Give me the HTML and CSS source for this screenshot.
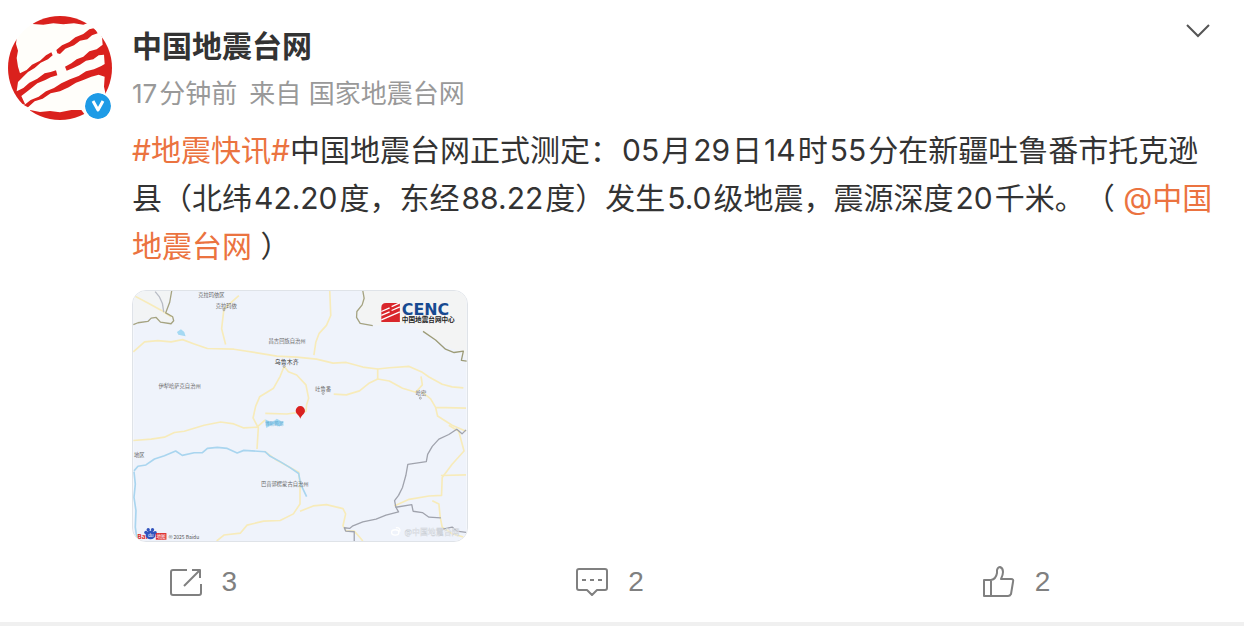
FILE: index.html
```html
<!DOCTYPE html>
<html lang="zh-CN">
<head>
    <meta charset="UTF-8">
    <meta name="viewport" content="width=device-width, initial-scale=1.0">
    <title>中国地震台网</title>
    <link rel="stylesheet" href="styles.css">
</head>
<body>
    <article class="post">
        <div class="avatar">
            <svg class="avatar-img" viewBox="24 24 312 312" aria-hidden="true">
                <defs>
                    <clipPath id="round"><circle cx="180" cy="180" r="156"/></clipPath>
                </defs>
                <g clip-path="url(#round)">
                    <rect x="24" y="24" width="312" height="312" fill="#fffefa"/>
                    <g fill="#da211d">
                        <path d="M104 20H256L266 44L250 50L222 46L190 49L160 46L130 50L98 48Z"/>
                        <path d="M20 90H50L48 108L54 128L50 150L54 176L60 196L80 186L96 170L120 158L138 142L154 133L158 142L144 154L122 164L104 180L84 192L68 208L54 222L52 236L50 250L70 240L88 224L112 212L134 196L152 192L168 187L172 202L152 208L136 216L112 226L92 242L64 264L76 290L20 280Z"/>
                        <path d="M169 126L186 112L208 102L226 88L250 78L268 64L284 60L293 76L276 82L262 94L240 98L222 112L196 122L180 138L172 136Z"/>
                        <path d="M195 176L214 166L230 154L250 146L268 130L290 124L308 110L306 88L300 76L340 70V270L318 264L312 236L314 206L296 200L274 206L250 216L228 224L206 238L180 250L152 256L128 272L104 280L84 298L72 292L92 276L116 266L138 250L162 240L184 226L210 214L236 204L258 190L282 184L304 174L314 168L312 140L296 142L280 154L258 158L240 170L220 180L200 188Z"/>
                        <path d="M90 306L120 312L150 309L180 313L214 306L244 306L262 330V340H90Z"/>
                    </g>
                </g>
            </svg>
            <svg class="badge" viewBox="0 0 26 26" aria-hidden="true">
                <circle cx="13" cy="13" r="13" fill="#1e9be6"/>
                <path d="M8 8L13 17L18 8" fill="none" stroke="#fff" stroke-width="3" stroke-linejoin="round"/>
            </svg>
        </div>

        <div class="main">
            <header class="head">
                <div>
                    <h1 class="name">中国地震台网</h1>
                    <p class="meta"><span><span class="num">17</span>分钟前</span><span>来自 国家地震台网</span></p>
                </div>
                <button class="more" type="button" aria-label="更多">
                    <svg width="24" height="14" viewBox="0 0 24 14"><path d="M1 1L12 12L23 1" fill="none" stroke="#555" stroke-width="2"/></svg>
                </button>
            </header>

            <p class="text"><a href="#topic">#地震快讯#</a>中国地震台网正式测定：<span class="num">05</span>月<span class="num">29</span>日<span class="num">14</span>时<span class="num">55</span>分在新疆吐鲁番市托克逊县（北纬<span class="num">42.20</span>度，东经<span class="num">88.22</span>度）发生<span class="num">5.0</span>级地震，震源深度<span class="num">20</span>千米。（ <a href="#user">@中国地震台网</a> ）</p>

            <!-- map units are a third of a pixel -->
            <svg class="map" viewBox="6 6 1008 756" role="img" aria-label="震中位置地图">
                <rect x="6" y="6" width="1008" height="756" fill="#eff3fb"/>
                <path d="M700 6L695 50L684 70L695 98L740 110L850 108L890 134L960 178L1000 190L1014 216V6Z" fill="#f3f4f4"/>
                <path d="M6 105L60 85L80 98L120 103L128 80L102 68L122 6H6Z" fill="#f2f4f5"/>

                <g class="roads">
                    <path d="M8 20L50 42L90 64L120 84"/>
                    <path d="M6 190L40 160L80 156L120 160L155 153L190 166L230 180L310 182L380 193L440 203L500 206L560 212L610 224L650 222L700 236L745 242L780 238L840 234L880 252L900 266L940 288L970 296L1004 299"/>
                    <path d="M325 20L280 60L273 120L285 168"/>
                    <path d="M600 6L603 80L590 110L568 134L558 160L552 200"/>
                    <path d="M745 240V274"/>
                    <path d="M612 318L650 320L690 308L720 284L745 272L780 278L820 300L860 312L880 290L876 264"/>
                    <path d="M880 312L905 332L920 358L1012 360M920 358L926 384L970 412L1012 430"/>
                    <path d="M462 234L450 264L430 300L388 326L376 354L368 390L384 420L380 484"/>
                    <path d="M462 234L475 250L500 260L528 290L536 330L530 350L528 370L470 378L405 376"/>
                    <path d="M6 458L60 454L100 448L130 434L160 430L220 412L270 402L310 408L340 420L380 418L405 396"/>
                    <path d="M402 490L440 518L480 540L506 554L510 590L510 650L490 680L450 700L400 702L350 714L330 738L280 744L258 762"/>
                    <path d="M510 672L550 656L590 652L640 664L648 680L640 716L650 732L674 732L690 750L700 762"/>
                    <path d="M795 656L840 636L900 626L938 624L940 570L970 530L1006 490L990 430L960 412"/>
                    <path d="M936 564L1012 562M910 640L930 650L934 690L940 720L970 740L1004 750"/>
                </g>

                <g class="rivers">
                    <path d="M8 550L20 536L44 532L70 514L100 504L134 490L154 503L190 495L215 495L230 482L260 479L290 482L320 496L340 488L404 492L420 506L450 522L480 540L506 558L512 590L530 628"/>
                    <path d="M8 552L12 590L8 630L14 670L12 720L18 762"/>
                </g>
                <path d="M138 130L150 122L160 130L164 143L142 138ZM405 394L425 404L440 392L460 404L448 416L430 408L408 420Z" fill="#a5d9f3"/>

                <g class="borders">
                    <path d="M122 6L116 40L104 72L125 84L128 96L120 105L88 100L75 86L60 88L50 98L20 102L6 108" stroke="#a5a381"/>
                    <path d="M72 8L85 24L94 44L98 70" stroke="#b8bcc5"/>
                    <path d="M700 6L704 28L698 48L682 68L681 86L692 104L730 111" stroke="#a5a381"/>
                    <path d="M882 128L920 154L950 182L976 192L1004 188L998 216L1014 218" stroke="#9c9b77"/>
                    <path d="M1012 426L1000 438L984 424L960 440L930 454L910 476L896 500L892 522L836 530L830 564L820 600L808 624L796 640L800 660L848 652L852 672L880 676L900 690L936 692"/>
                    <path d="M800 660L808 674L770 684L740 696L700 704L670 716L660 724L644 722L648 732L674 734V762"/>
                    <path d="M942 726L970 720L984 732L1012 736"/>
                </g>

                <g class="labels">
                    <text x="202" y="24">克拉玛依区</text>
                    <text x="255" y="58">克拉玛依</text>
                    <text x="415" y="164">昌吉回族自治州</text>
                    <text class="city" x="434" y="226">乌鲁木齐</text>
                    <text x="82" y="300">伊犁哈萨克自治州</text>
                    <text x="556" y="308">吐鲁番</text>
                    <text x="860" y="322">哈密</text>
                    <text x="8" y="508">地区</text>
                    <text class="lake" x="404" y="412">博斯腾湖</text>
                    <text x="392" y="597">巴音郭楞蒙古自治州</text>
                </g>
                <g fill="none" stroke="#888" stroke-width="2">
                    <circle cx="280" cy="63" r="3"/><circle cx="462" cy="234" r="3"/><circle cx="580" cy="316" r="3"/><circle cx="874" cy="330" r="3"/>
                </g>

                <path d="M511 392C507 380 497 378 497 368A14 14 0 0 1 525 368C525 378 515 380 511 392Z" fill="#d9211f"/>

                <!-- CENC logo -->
                <path d="M756 56Q756 42 770 42H812V100H756Z" fill="#d9262b"/>
                <path d="M756 68L781 57M787 53L812 42M756 80L781 69M787 65L812 54M756 93L812 69" stroke="#fff" stroke-width="4"/>
                <text class="cenc" x="818" y="78">CENC</text>
                <text class="cenc-name" x="818" y="99">中国地震台网中心</text>

                <!-- Baidu mark and watermark -->
                <text class="baidu" x="18" y="756">Bai</text>
                <g fill="#3153bd">
                    <ellipse cx="58" cy="744" rx="15" ry="13"/>
                    <circle cx="44" cy="736" r="5"/><circle cx="51" cy="728" r="5"/><circle cx="64" cy="728" r="5"/><circle cx="72" cy="737" r="5"/>
                </g>
                <text x="50" y="750" fill="#fff" font-size="14">du</text>
                <rect x="74" y="738" width="32" height="20" fill="#dc2929"/>
                <text class="baidu-map" x="76" y="754">地图</text>
                <text class="copy" x="112" y="755">© 2025 Baidu</text>
                <g fill="none" stroke="#fff" stroke-width="4">
                    <ellipse cx="798" cy="736" rx="11" ry="8"/>
                    <path d="M800 722Q814 720 812 734"/>
                </g>
                <text class="mark" x="826" y="744">@中国地震台网</text>
            </svg>
        </div>
    </article>

    <footer class="actions">
        <button type="button" aria-label="转发 3">
            <svg width="32" height="28" viewBox="0 0 32 28"><path d="M17 2H3Q1 2 1 4V25Q1 27 3 27H29Q31 27 31 25V16M14 18L30 2M22 2H30V10"/></svg>
            <span>3</span>
        </button>
        <button type="button" aria-label="评论 2">
            <svg width="32" height="28" viewBox="0 0 32 28"><path d="M3 1H29Q31 1 31 3V20Q31 22 29 22H21L16 27L11 22H3Q1 22 1 20V3Q1 1 3 1ZM6 12H10M14 12H18M22 12H26"/></svg>
            <span>2</span>
        </button>
        <button type="button" aria-label="赞 2">
            <svg width="32" height="32" viewBox="0 0 32 32"><path d="M8 14H1V30H8ZM8 14Q13 13 14 7V4Q15 1 17 1Q20 2 20 6Q20 9 18 13H28Q31 13 30 16L28 28Q27 30 25 30H8"/></svg>
            <span>2</span>
        </button>
    </footer>
</body>
</html>
```

FILE: styles.css
```css
* {
    box-sizing: border-box;
}

body {
    margin: 0;
    background: #fff;
    color: #333;
    font-family: Inter, "Noto Sans CJK SC", sans-serif;
    text-spacing-trim: space-all;
}

button {
    padding: 0;
    border: 0;
    background: none;
    font: inherit;
    color: inherit;
    cursor: pointer;
}

a {
    color: #eb7340;
    text-decoration: none;
}

.post {
    display: flex;
    gap: 20px;
    padding: 16px 24px 0 8px;
}

.avatar {
    position: relative;
    flex: none;
    width: 104px;
    height: 104px;
}

.avatar-img {
    display: block;
    width: 100%;
}

.badge {
    position: absolute;
    right: 0;
    bottom: 0;
    width: 28px;
    padding: 1px;
    border-radius: 50%;
    background: #fff;
}

.main {
    flex: 1;
    min-width: 0;
}

.head {
    display: flex;
    justify-content: space-between;
    align-items: flex-start;
}

.name {
    margin: 10px 0 0;
    font-size: 30px;
    line-height: 40px;
    font-weight: 700;
}

.meta {
    display: flex;
    gap: 12px;
    margin: 8px 0 0;
    font-size: 26px;
    line-height: 40px;
    color: #999;
}

.more {
    display: flex;
    padding: 8px 10px;
}

.text {
    margin: 12px 0 20px;
    font-size: 30px;
    line-height: 48px;
}

.num {
    margin: 0 2px;
}

.meta .num {
    margin-left: 0;
}

/* map picture */
.map {
    display: block;
    width: 336px;
    height: 252px;
    border: 1px solid #dfe3e8;
    border-radius: 14px;
    font-family: "Noto Sans CJK SC", sans-serif;
}

.roads {
    fill: none;
    stroke: #f7ebba;
    stroke-width: 5;
    stroke-linejoin: round;
}

.rivers {
    fill: none;
    stroke: #a9d5ef;
    stroke-width: 5;
    stroke-linejoin: round;
}

.borders {
    fill: none;
    stroke: #a0a3ad;
    stroke-width: 4;
    stroke-linejoin: round;
}

.labels {
    font-size: 16px;
    fill: #666;
}

.labels .city {
    font-size: 18px;
    fill: #333;
}

.labels .lake {
    font-size: 14px;
    fill: #5ba9d2;
}

.cenc {
    font-family: "DejaVu Sans", sans-serif;
    font-size: 48px;
    font-weight: 700;
    fill: #174a91;
}

.cenc-name {
    font-size: 20px;
    font-weight: 700;
    fill: #222;
}

.baidu {
    font-size: 20px;
    font-weight: 700;
    fill: #dc2929;
}

.baidu-map {
    font-size: 14px;
    fill: #fff;
}

.copy {
    font-size: 15px;
    fill: #555;
}

.mark {
    font-size: 24px;
    fill: #fff;
    stroke: #c9ced5;
    stroke-width: 1;
}

/* bottom bar */
.actions {
    display: grid;
    grid-template-columns: repeat(3, 1fr);
    align-items: center;
    padding: 20px 24px 20px 0;
    border-bottom: 4px solid #f0f0f0;
}

.actions button {
    display: flex;
    justify-content: center;
    align-items: center;
    gap: 20px;
    font-family: "Liberation Sans", Arial, sans-serif;
    font-size: 28px;
    line-height: 40px;
    color: #808080;
}

.actions svg {
    fill: none;
    stroke: #808080;
    stroke-width: 2;
    stroke-linejoin: round;
}
```
